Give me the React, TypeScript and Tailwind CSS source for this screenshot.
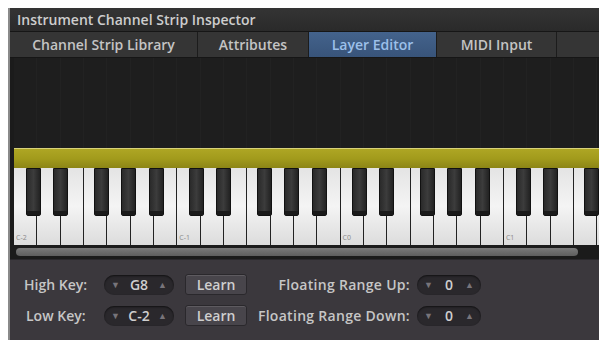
import React from "react";

const WHITE_W = 23.33;
const WHITE_COUNT = 26;
const BLACK_OFFSETS = [0.5, 1.66, 3.42, 4.58, 5.77];
const NAMES = ["C-2", "C-1", "C0", "C1"];

function Keyboard() {
  const whites = Array.from({ length: WHITE_COUNT });
  const blacks: number[] = [];
  for (let o = 0; o < 4; o++) {
    for (const b of BLACK_OFFSETS) {
      const x = (o * 7 + b) * WHITE_W;
      if (x < 600) blacks.push(x);
    }
  }
  return (
    <div className="relative h-[77px] overflow-hidden">
      <div className="flex h-full">
        {whites.map((_, i) => (
          <div
            key={i}
            className="relative h-full shrink-0 border-r border-[#222] bg-gradient-to-b from-[#e4e4e4] via-[#f4f4f4] to-[#dcdcdc]"
            style={{ width: WHITE_W }}
          >
            {i % 7 === 0 && i / 7 < NAMES.length && (
              <span className="absolute bottom-[4px] left-[2px] text-[7px] leading-none text-[#8a8a8a]">
                {NAMES[i / 7]}
              </span>
            )}
          </div>
        ))}
      </div>
      {blacks.map((x, i) => (
        <div
          key={i}
          className="absolute top-0 h-[48px] w-[15px] rounded-b-[2px] border border-[#111] bg-gradient-to-r from-[#2a2a2a] via-[#3c3c3c] to-[#222]"
          style={{ left: x }}
        >
          <div className="absolute bottom-0 left-0 right-0 h-[4px] bg-[#1a1a1a]" />
        </div>
      ))}
    </div>
  );
}

function Stepper({ value, w }: { value: string; w: string }) {
  return (
    <div
      className={`flex h-[20px] ${w} items-center justify-between rounded-full bg-[#2a282c] px-[7px] shadow-[inset_0_1px_2px_rgba(0,0,0,0.6)]`}
    >
      <span className="text-[9px] leading-none text-[#77747a]">▼</span>
      <span className="text-[14px] font-semibold text-[#cfcfcf]">{value}</span>
      <span className="text-[9px] leading-none text-[#77747a]">▲</span>
    </div>
  );
}

function Learn() {
  return (
    <div className="flex h-[21px] w-[62px] items-center justify-center rounded-[3px] border border-[#2a282c] bg-[#48454b] text-[14px] font-semibold text-[#cfcfcf] shadow-[inset_0_1px_0_rgba(255,255,255,0.12)]">
      Learn
    </div>
  );
}

export default function App() {
  const tabs = [
    { label: "Channel Strip Library", w: "w-[188px]" },
    { label: "Attributes", w: "w-[111px]" },
    { label: "Layer Editor", w: "w-[128px]", active: true },
    { label: "MIDI Input", w: "w-[120px]" },
  ];
  return (
    <div
      className="h-[348px] w-[606px] bg-white pb-[8px] pl-[8px] pr-[7px] pt-[8px]"
      style={{ fontFamily: '"Open Sans", "Liberation Sans", Arial, sans-serif' }}
    >
      <div className="flex h-full flex-col border-l-2 border-[#8a8a8a] bg-[#2b2b2b]">
        <div className="flex h-[23px] items-center bg-gradient-to-b from-[#343434] to-[#2a2a2a] pl-[7px] text-[14px] font-semibold text-[#cdcdcd]">
          Instrument Channel Strip Inspector
        </div>
        <div className="flex h-[27px] border-y border-[#161616] bg-[#353535]">
          {tabs.map((t) => (
            <div
              key={t.label}
              className={`flex ${t.w} items-center justify-center border-r border-[#1c1c1c] text-[14px] font-semibold ${
                t.active
                  ? "bg-gradient-to-b from-[#44638c] to-[#38547a] text-[#9cc0ea]"
                  : "text-[#c4c4c4]"
              }`}
            >
              {t.label}
            </div>
          ))}
          <div className="flex-1" />
        </div>
        <div className="flex flex-col bg-[#1b1b1b] pl-[4px]">
          <div className="flex h-[90px]">
            {Array.from({ length: 25 }).map((_, i) => (
              <div
                key={i}
                className="h-full w-[23.33px] shrink-0 border-r border-[#222] bg-[#1e1e1e]"
              />
            ))}
          </div>
          <div className="h-[20px] border-t border-[#d8d27a] bg-gradient-to-b from-[#aea624] via-[#a29b1c] to-[#8c8516]" />
          <Keyboard />
          <div className="flex h-[14px] items-center">
            <div className="ml-[2px] h-[8px] w-[562px] rounded-full bg-gradient-to-b from-[#7a7a7a] to-[#5e5e5e]" />
          </div>
        </div>
        <div className="flex flex-1 flex-col justify-center gap-[10px] border-t border-[#2a282c] bg-[#3b383d] pl-[14px]">
          <div className="flex items-center">
            <span className="w-[80px] text-[14px] font-semibold text-[#c6c6c6]">High Key:</span>
            <Stepper value="G8" w="w-[70px]" />
            <div className="ml-[11px]">
              <Learn />
            </div>
            <span className="w-[163px] text-right text-[14px] font-semibold tracking-[0.3px] text-[#c6c6c6]">
              Floating Range Up:
            </span>
            <div className="ml-[7px]">
              <Stepper value="0" w="w-[64px]" />
            </div>
          </div>
          <div className="flex items-center">
            <span className="w-[80px] pl-[2px] text-[14px] font-semibold text-[#c6c6c6]">Low Key:</span>
            <Stepper value="C-2" w="w-[70px]" />
            <div className="ml-[11px]">
              <Learn />
            </div>
            <span className="w-[163px] text-right text-[14px] font-semibold tracking-[0.3px] text-[#c6c6c6]">
              Floating Range Down:
            </span>
            <div className="ml-[7px]">
              <Stepper value="0" w="w-[64px]" />
            </div>
          </div>
        </div>
      </div>
    </div>
  );
}
